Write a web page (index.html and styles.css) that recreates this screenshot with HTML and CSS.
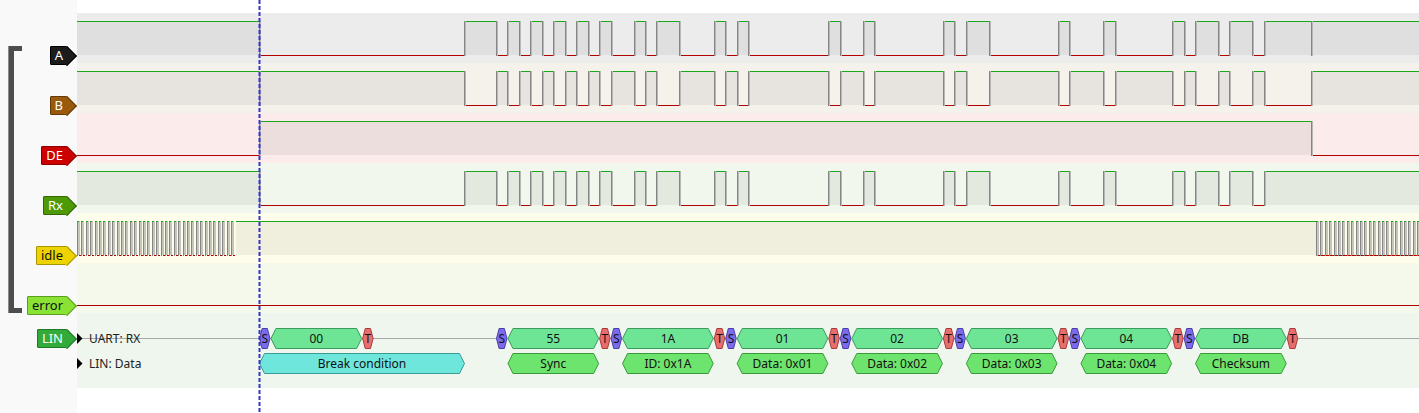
FILE: index.html
```html
<!DOCTYPE html>
<html lang="en">
<head>
  <meta charset="UTF-8">
  <title>PulseView - LIN capture</title>
  <link rel="stylesheet" href="styles.css">
</head>
<body>
  <div class="view">
    <!-- Channel headers -->
    <div class="headers">
      <div class="group-bracket"></div>
      <div class="row"><span class="tag tag-a">A</span></div>
      <div class="row"><span class="tag tag-b">B</span></div>
      <div class="row"><span class="tag tag-de">DE</span></div>
      <div class="row"><span class="tag tag-rx">Rx</span></div>
      <div class="row"><span class="tag tag-idle">idle</span></div>
      <div class="row"><span class="tag tag-error">error</span></div>
      <div class="row decoder"><span class="tag tag-lin">LIN</span></div>
    </div>

    <!-- Trace canvas -->
    <div class="traces">
      <svg id="traces" width="1342" height="413" viewBox="77 0 1342 413"></svg>
    </div>
  </div>

  <script>
    const svg = document.getElementById("traces");
    const NS = "http://www.w3.org/2000/svg";
    const END = 1419;

    function el(tag, attrs, text) {
      const e = document.createElementNS(NS, tag);
      for (const k in attrs) e.setAttribute(k, attrs[k]);
      if (text !== undefined) e.textContent = text;
      svg.appendChild(e);
      return e;
    }

    // row backgrounds
    const rows = [
      { top: 13, bg: "#ececec" },
      { top: 63, bg: "#f5f1eb" },
      { top: 113, bg: "#fbebeb" },
      { top: 163, bg: "#f2f7ee" },
      { top: 213, bg: "#fefdeb" },
      { top: 263, bg: "#f4f9ec" }
    ];
    el("rect", { x: 77, y: 0, width: 1342, height: 413, fill: "#fff" });
    rows.forEach(r => el("rect", { x: 77, y: r.top, width: 1342, height: 50, fill: r.bg }));
    el("rect", { x: 77, y: 313, width: 1342, height: 75, fill: "#eef6ee" });

    // serial bitstream: break, delimiter, then 7 LIN frames
    const T = 11.46, FW = T * 10, F1 = 496;
    const bytes = [0x55, 0x1A, 0x01, 0x02, 0x03, 0x04, 0xDB];
    const linNames = ["Sync", "ID: 0x1A", "Data: 0x01", "Data: 0x02", "Data: 0x03", "Data: 0x04", "Checksum"];

    let rx = [[77, 1], [259, 0], [464, 1]];
    bytes.forEach((b, k) => {
      const s = F1 + k * FW;
      rx.push([s, 0]);
      for (let i = 0; i < 8; i++) rx.push([s + (i + 1) * T, (b >> i) & 1]);
      rx.push([s + 9 * T, 1]);
    });

    function merge(levels) {
      return levels.filter((v, i) => i === 0 || v[1] !== levels[i - 1][1]);
    }
    rx = merge(rx);
    const a = merge(rx.concat());
    const b = merge([[77, 1]].concat(rx.filter(v => v[0] >= 259).map(v => [v[0], 1 - v[1]]), [[1311, 1]]));
    const de = [[77, 0], [259, 1], [1311, 0]];

    const px = x => Math.round(x);

    function edge(x, yH, yL) {
      el("rect", { x: x, y: yH, width: 1, height: yL - yH + 1, fill: "#858585" });
      el("rect", { x: x + 1, y: yH, width: 1, height: yL - yH + 1, fill: "#b8b8b8" });
    }

    function drawSignal(levels, top, glitches) {
      const yH = top + 8, yL = top + 42;
      levels.forEach(([x, l], i) => {
        const x0 = px(x), x1 = i + 1 < levels.length ? px(levels[i + 1][0]) : END;
        if (l) {
          el("rect", { x: x0, y: yH, width: x1 - x0, height: yL - yH, fill: "rgba(0,0,0,0.055)" });
          el("line", { x1: x0, y1: yH + 0.5, x2: x1, y2: yH + 0.5, stroke: "#1aa81a" });
        } else {
          el("line", { x1: x0, y1: yL + 0.5, x2: x1, y2: yL + 0.5, stroke: "#b00000" });
        }
      });
      levels.slice(1).map(v => v[0]).concat(glitches || []).forEach(x => edge(px(x), yH, yL));
    }

    function drawClock(x0, x1, top) {
      const yH = top + 8, yL = top + 42;
      for (let x = x0; x < x1 - 1; x += 4.4) {
        const r = px(x);
        el("rect", { x: r, y: yH, width: 3, height: yL - yH, fill: "#c6c5bc" });
        el("rect", { x: r, y: yH, width: 1, height: yL - yH + 1, fill: "#858585" });
        el("line", { x1: r, y1: yH + 0.5, x2: r + 2, y2: yH + 0.5, stroke: "#1aa81a" });
        el("line", { x1: r + 2, y1: yL + 0.5, x2: r + 4, y2: yL + 0.5, stroke: "#b00000" });
      }
    }

    drawSignal(a, 13, [1311]);
    drawSignal(b, 63, [259]);
    drawSignal(de, 113);
    drawSignal(rx, 163);
    drawClock(77, 236, 213);
    drawSignal([[236, 1], [1316, 0]], 213);
    drawClock(1316, END, 213);
    drawSignal([[77, 0]], 263);

    // decoder rows
    el("line", { x1: 77, y1: 338.5, x2: END, y2: 338.5, stroke: "#a8a8a8" });
    el("polygon", { points: "77,333 82.5,338.5 77,344", fill: "#000" });
    el("text", { x: 89, y: 342.5, class: "row-name" }, "UART: RX");
    el("polygon", { points: "77,358 82.5,363.5 77,369", fill: "#000" });
    el("text", { x: 89, y: 367.5, class: "row-name" }, "LIN: Data");

    function ann(x0, x1, cy, fill, stroke, label) {
      const l = x0 + 0.5, r = x1 - 0.5, d = Math.min(5, (r - l) / 4);
      const t = cy - 10, bm = cy + 10;
      el("polygon", {
        points: `${l},${cy} ${l + d},${t} ${r - d},${t} ${r},${cy} ${r - d},${bm} ${l + d},${bm}`,
        fill: fill, stroke: stroke
      });
      el("text", { x: (l + r) / 2, y: cy + 4.5, class: "ann" }, label);
    }

    const hex = v => v.toString(16).toUpperCase().padStart(2, "0");
    function uartFrame(s, label) {
      ann(s, s + T, 338.5, "#7b6bec", "#4a3ea8", "S");
      ann(s + T, s + 9 * T, 338.5, "#6ee595", "#3c9a5c", label);
      ann(s + 9 * T, s + 10 * T, 338.5, "#e86e6e", "#a83c3c", "T");
    }
    uartFrame(259, "00");
    bytes.forEach((v, k) => uartFrame(F1 + k * FW, hex(v)));

    ann(259, 465, 363.5, "#6ee6dc", "#3a9d95", "Break condition");
    linNames.forEach((n, k) => {
      const s = F1 + k * FW;
      ann(s + T, s + 9 * T, 363.5, "#6de46d", "#3a9a3a", n);
    });

    // cursor
    el("line", { x1: 259.5, y1: 0, x2: 259.5, y2: 413, stroke: "#3535c9", "stroke-width": 2, "stroke-dasharray": "4 2" });
  </script>
</body>
</html>
```

FILE: styles.css
```css
* { box-sizing: border-box; }
body {
  margin: 0;
  font-family: "Noto Sans", "DejaVu Sans", sans-serif;
  background: #fff;
  overflow: hidden;
}
.view {
  display: flex;
  height: 413px;
}
.headers {
  position: relative;
  flex: none;
  width: 77px;
  padding-top: 13px;
  background: #f9f9f9;
}
.group-bracket {
  position: absolute;
  left: 9px;
  top: 46px;
  width: 13px;
  height: 267px;
  border: 5px solid #4d4d4d;
  border-right: none;
  box-shadow: -1px 0 0 #8a8a8a;
}
.row {
  display: flex;
  justify-content: flex-end;
  align-items: flex-start;
  height: 50px;
  padding: 33px 10px 0 0;
}
.row.decoder { height: 75px; padding-top: 16px; }
.tag {
  position: relative;
  z-index: 0;
  height: 19px;
  padding: 0 3px 0 4px;
  border: 1px solid;
  border-radius: 1px;
  font-size: 13px;
  line-height: 17px;
  color: #fff;
}
.tag::after {
  content: "";
  position: absolute;
  z-index: -1;
  top: 2px;
  right: -7.5px;
  width: 13px;
  height: 13px;
  background: inherit;
  border-top: 1px solid;
  border-right: 1px solid;
  border-color: inherit;
  transform: rotate(45deg);
}
.tag-a { background: #1c1c1c; border-color: #000; }
.tag-b { background: #9a5a0b; border-color: #633905; }
.tag-de { background: #cc0000; border-color: #8a0000; }
.tag-rx { background: #4e9a06; border-color: #336604; }
.tag-idle { background: #edd400; border-color: #a89500; color: #111; }
.tag-error { background: #8ae234; border-color: #5b9e1c; color: #111; }
.tag-lin { background: #32ab3a; border-color: #1f7a25; }

.traces { flex: none; width: 1342px; }
.traces svg { display: block; }
.row-name { font-size: 12px; fill: #222; }
.ann {
  font-size: 12px;
  fill: #111;
  text-anchor: middle;
}
```
